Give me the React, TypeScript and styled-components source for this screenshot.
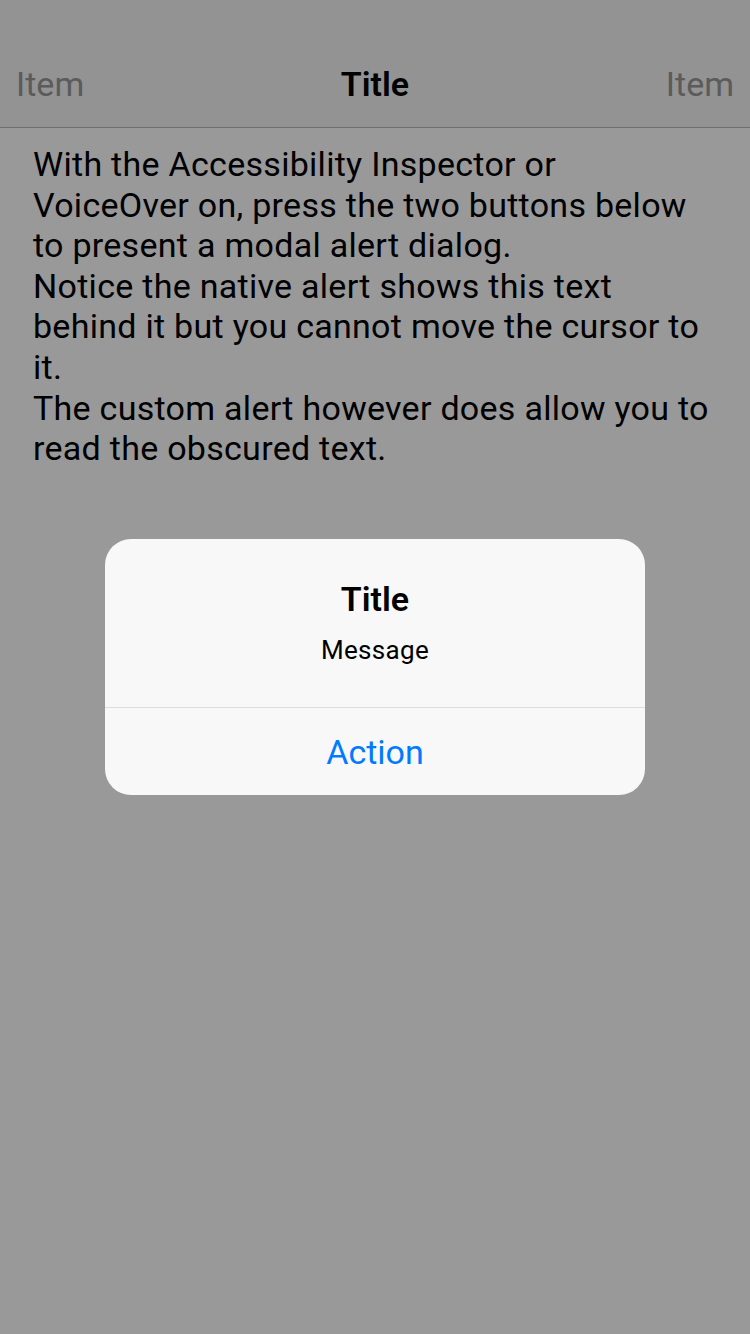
import React from "react";
import styled, { createGlobalStyle } from "styled-components";

const Global = createGlobalStyle`
  html, body { margin: 0; padding: 0; }
  body { background: #999999; font-family: Roboto, "Liberation Sans", sans-serif; }
  #root { min-height: 1334px; }
`;

const Screen = styled.div`
  position: relative;
  width: 750px;
  height: 1334px;
  background: #999999;
  overflow: hidden;
`;

const NavBar = styled.header`
  height: 128px;
  box-sizing: border-box;
  padding-top: 40px;
  background: #939393;
  border-bottom: 1px solid #6f6f6f;
`;

const NavRow = styled.div`
  height: 88px;
  display: grid;
  grid-template-columns: 1fr auto 1fr;
  align-items: center;
  padding: 0 16px;
`;

const NavItem = styled.span<{ $align: "left" | "right" }>`
  font-size: 34px;
  color: #5b5b5b;
  text-align: ${(p) => p.$align};
`;

const NavTitle = styled.span`
  font-size: 34px;
  font-weight: 600;
  color: #000;
`;

const Body = styled.div`
  padding: 16px 0 0 33px;
`;

const Paragraph = styled.p`
  margin: 0;
  font-size: 34px;
  line-height: 40.6px;
  letter-spacing: 0.28px;
  color: #000;
  white-space: nowrap;
`;

const Line = styled.span`
  display: block;
`;

const Overlay = styled.div`
  position: absolute;
  inset: 0;
  display: flex;
  align-items: center;
  justify-content: center;
`;

const Alert = styled.div`
  width: 540px;
  border-radius: 26px;
  background: #f8f8f8;
  overflow: hidden;
`;

const AlertContent = styled.div`
  padding: 40px 32px 41px;
  display: flex;
  flex-direction: column;
  align-items: center;
  gap: 15px;
  border-bottom: 1px solid #dcdcdc;
`;

const AlertTitle = styled.div`
  font-size: 34px;
  font-weight: 600;
  line-height: 40px;
  color: #000;
`;

const AlertMessage = styled.div`
  font-size: 26px;
  line-height: 32px;
  letter-spacing: 0.3px;
  color: #000;
`;

const AlertButton = styled.div`
  height: 87px;
  display: flex;
  align-items: center;
  justify-content: center;
  font-size: 34px;
  color: #007aff;
`;

export default function App() {
  return (
    <Screen>
      <Global />
      <NavBar>
        <NavRow>
          <NavItem $align="left">Item</NavItem>
          <NavTitle>Title</NavTitle>
          <NavItem $align="right">Item</NavItem>
        </NavRow>
      </NavBar>
      <Body>
        <Paragraph>
          <Line>With the Accessibility Inspector or</Line>
          <Line>VoiceOver on, press the two buttons below</Line>
          <Line>to present a modal alert dialog.</Line>
          <Line>Notice the native alert shows this text</Line>
          <Line>behind it but you cannot move the cursor to</Line>
          <Line>it.</Line>
          <Line>The custom alert however does allow you to</Line>
          <Line>read the obscured text.</Line>
        </Paragraph>
      </Body>
      <Overlay>
        <Alert>
          <AlertContent>
            <AlertTitle>Title</AlertTitle>
            <AlertMessage>Message</AlertMessage>
          </AlertContent>
          <AlertButton>Action</AlertButton>
        </Alert>
      </Overlay>
    </Screen>
  );
}
